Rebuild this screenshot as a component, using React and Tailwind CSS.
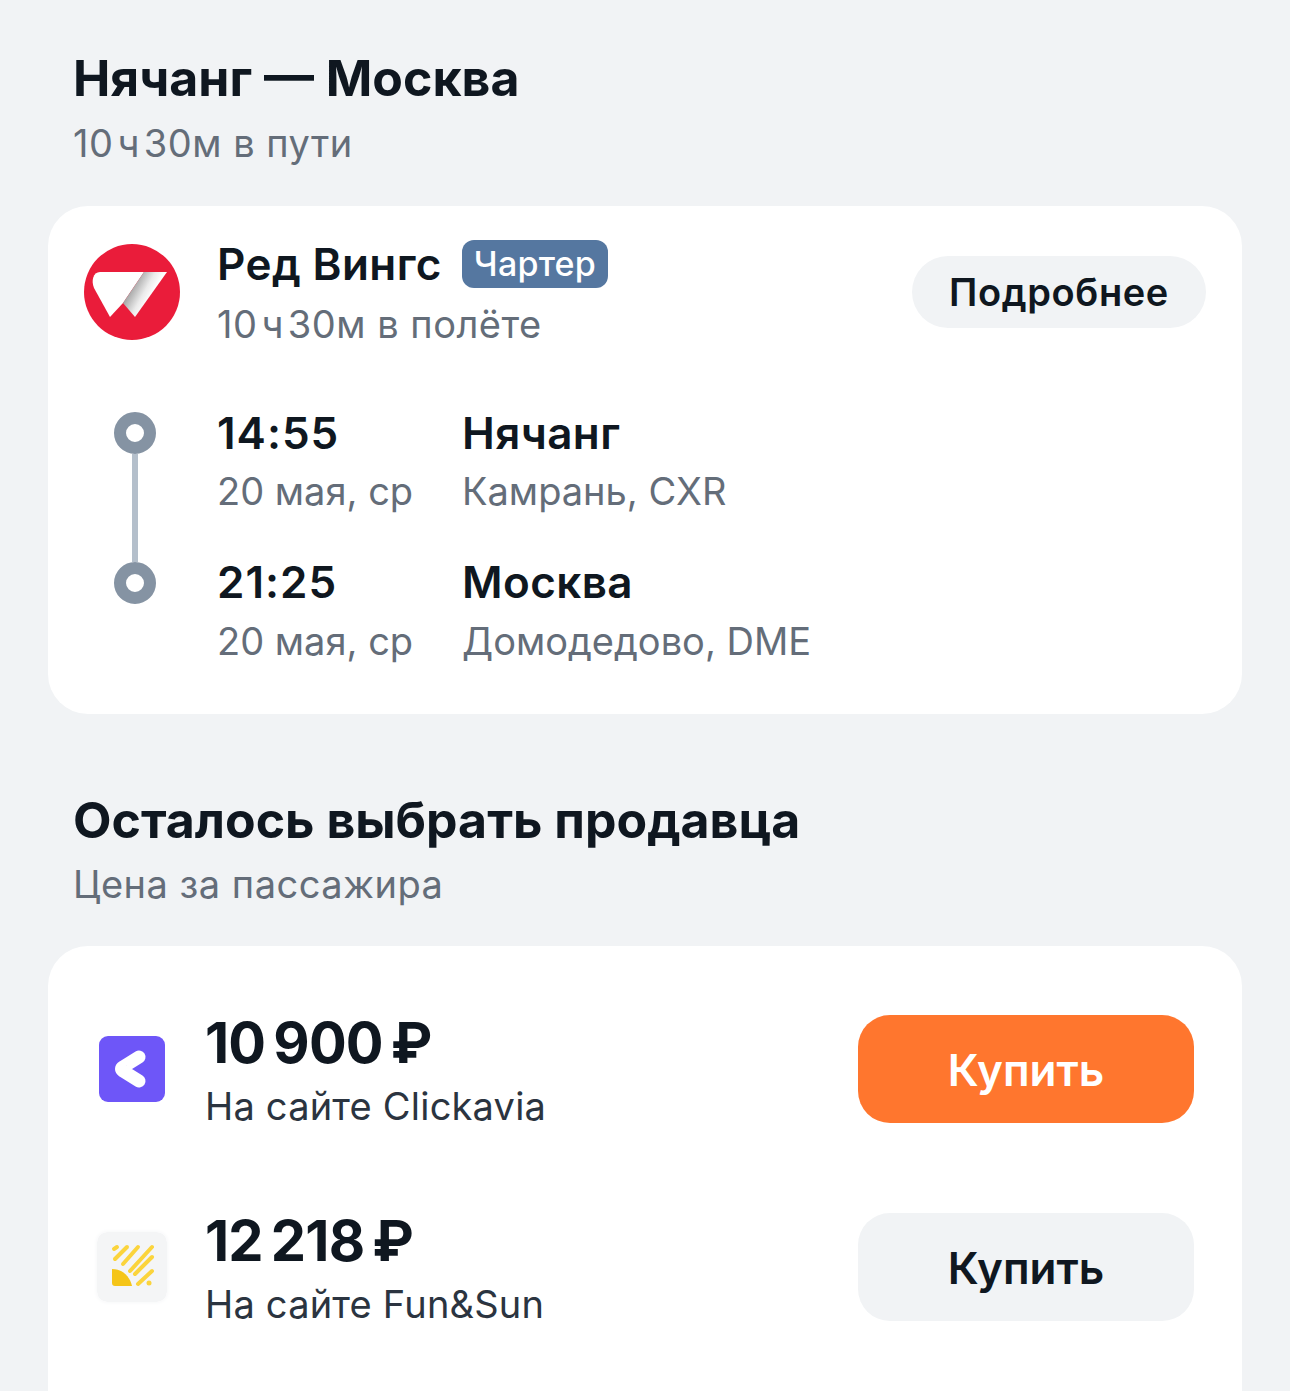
import { useId } from 'react';

const RedWingsLogo = () => {
    const id = useId();
    return (
        <svg viewBox="0 0 96 96" className="w-24 h-24 shrink-0">
            <defs>
                <linearGradient id={id} gradientUnits="userSpaceOnUse" x1="49" y1="43" x2="67" y2="53">
                    <stop offset="0" stopColor="#a9a9a9" />
                    <stop offset="0.6" stopColor="#ebebeb" />
                    <stop offset="1" stopColor="#ffffff" />
                </linearGradient>
            </defs>
            <circle cx="48" cy="48" r="48" fill="#ea1c3a" />
            <path d="M16 28 H60 L39 59 L26 73 L10 44 C7 37 9 28 16 28 Z" fill="#fff" />
            <path d="M60 28 H83 L51 73 L39 59 Z" fill={`url(#${id})`} />
        </svg>
    );
};

const ClickaviaLogo = () => (
    <svg viewBox="0 0 66 66" className="w-[66px] h-[66px] shrink-0">
        <rect width="66" height="66" rx="9" fill="#6e56f8" />
        <path d="M40 21 L24 31 Q21 33 24 35 L40 45" fill="none" stroke="#fff" strokeWidth="13" strokeLinecap="round" strokeLinejoin="round" />
    </svg>
);

const FunSunLogo = () => (
    <svg viewBox="0 0 70 70" className="w-[70px] h-[70px] shrink-0 rounded-[10px] shadow-[0_0_4px_#f3f4f6]">
        <rect width="70" height="70" rx="10" fill="#f4f5f6" />
        <g stroke="#fbd43c" strokeWidth="4" strokeLinecap="round">
            <path d="M17 17 L20 15" />
            <path d="M18 27 L30 15" />
            <path d="M26 32 L41 15" />
            <path d="M33 39 L55 15" />
            <path d="M38 42 L55 25" />
            <path d="M41 52 L55 39" />
        </g>
        <circle cx="52" cy="51" r="2.500" fill="#fbd43c" />
        <path d="M15 37 C26 37 33 45 35 54 H18 Q15 54 15 51 Z" fill="#f5c518" />
    </svg>
);

const Ring = () => <div className="w-[42px] h-[42px] rounded-full border-[12px] border-[#8593a3] bg-white shrink-0" />;

const Leg = ({ time, date, city, airport, top, dateTop }) => (
    <div className={`flex ${top}`}>
        <div className="w-[245px]">
            <div className="text-[44px] leading-[52px] font-semibold tracking-[1px] text-[#0f1720]">{time}</div>
            <div className={`text-[38px] leading-[46px] ${dateTop} text-[#646d79]`}>{date}</div>
        </div>
        <div>
            <div className="text-[44px] leading-[52px] font-semibold tracking-[0.4px] text-[#0f1720]">{city}</div>
            <div className={`text-[38px] leading-[46px] ${dateTop} text-[#646d79]`}>{airport}</div>
        </div>
    </div>
);

const Offer = ({ logo, price, seller, primary }) => (
    <div className="flex items-center h-[108px]">
        <div className="w-[157px] pl-[11px] flex items-center justify-center">{logo}</div>
        <div className="flex-1">
            <div className="pt-[2px] text-[56px] leading-[64px] font-bold text-[#0f1720] tracking-[-0.8px]">{price}</div>
            <div className="text-[38px] leading-[46px] mt-[8px] tracking-[0.2px] text-[#2b3440]">{seller}</div>
        </div>
        <button className={`w-[336px] h-[108px] pt-[2px] rounded-[32px] text-[44px] font-semibold ${primary ? 'bg-[#ff762e] text-white' : 'bg-[#f1f3f5] text-[#0f1720]'}`}>
            Купить
        </button>
    </div>
);

export default function App() {
    return (
        <div className="w-[1290px] h-[1391px] overflow-hidden bg-[#f1f3f5] px-[48px] pt-[48px] font-['Inter',sans-serif]">
            <div className="px-[25px]">
                <h1 className="text-[50px] leading-[60px] font-bold text-[#0f1720]">Нячанг — Москва</h1>
                <p className="text-[38px] leading-[46px] mt-[12px] tracking-[0.5px] text-[#646d79]">{'10\u200Aч\u200A30м в пути'}</p>
            </div>

            <div className="mt-[40px] h-[508px] rounded-[40px] bg-white px-[36px] pt-[38px]">
                <div className="flex items-center h-[96px]">
                    <RedWingsLogo />
                    <div className="ml-[37px] flex-1 pt-[4px]">
                        <div className="flex items-center h-[46px]">
                            <span className="text-[44px] leading-[52px] font-semibold tracking-[0.4px] text-[#0f1720]">Ред Вингс</span>
                            <span className="ml-[20px] h-[48px] px-[12px] rounded-[12px] bg-[#5577a0] text-white text-[34px] leading-[48px] font-medium tracking-[0.2px]">Чартер</span>
                        </div>
                        <div className="text-[38px] leading-[46px] mt-[14px] tracking-[0.5px] text-[#646d79]">{'10\u200Aч\u200A30м в полёте'}</div>
                    </div>
                    <button className="h-[72px] w-[294px] rounded-full bg-[#f1f3f5] text-[38px] font-semibold tracking-[0.6px] text-[#0f1720]">Подробнее</button>
                </div>

                <div className="flex mt-[46px]">
                    <div className="w-[133px] pl-[30px] pt-[26px] flex flex-col items-start">
                        <Ring />
                        <div className="w-[6px] h-[108px] ml-[18px] bg-[#b4bfcb]" />
                        <Ring />
                    </div>
                    <div className="flex-1">
                        <Leg time="14:55" date="20 мая, ср" city="Нячанг" airport="Камрань, CXR" top="pt-[21px]" dateTop="mt-[9px]" />
                        <Leg time="21:25" date="20 мая, ср" city="Москва" airport="Домодедово, DME" top="pt-[42px]" dateTop="mt-[10px]" />
                    </div>
                </div>
            </div>

            <div className="px-[25px] mt-[76px]">
                <h2 className="text-[50px] leading-[60px] font-bold text-[#0f1720]">Осталось выбрать продавца</h2>
                <p className="text-[38px] leading-[46px] mt-[11px] tracking-[0.5px] text-[#646d79]">Цена за пассажира</p>
            </div>

            <div className="mt-[39px] h-[600px] rounded-[40px] bg-white pt-[69px] pr-[48px] flex flex-col gap-[90px]">
                <Offer logo={<ClickaviaLogo />} price={'10\u2009900\u2009₽'} seller="На сайте Clickavia" primary />
                <Offer logo={<FunSunLogo />} price={'12\u2009218\u2009₽'} seller="На сайте Fun&Sun" />
            </div>
        </div>
    );
}
